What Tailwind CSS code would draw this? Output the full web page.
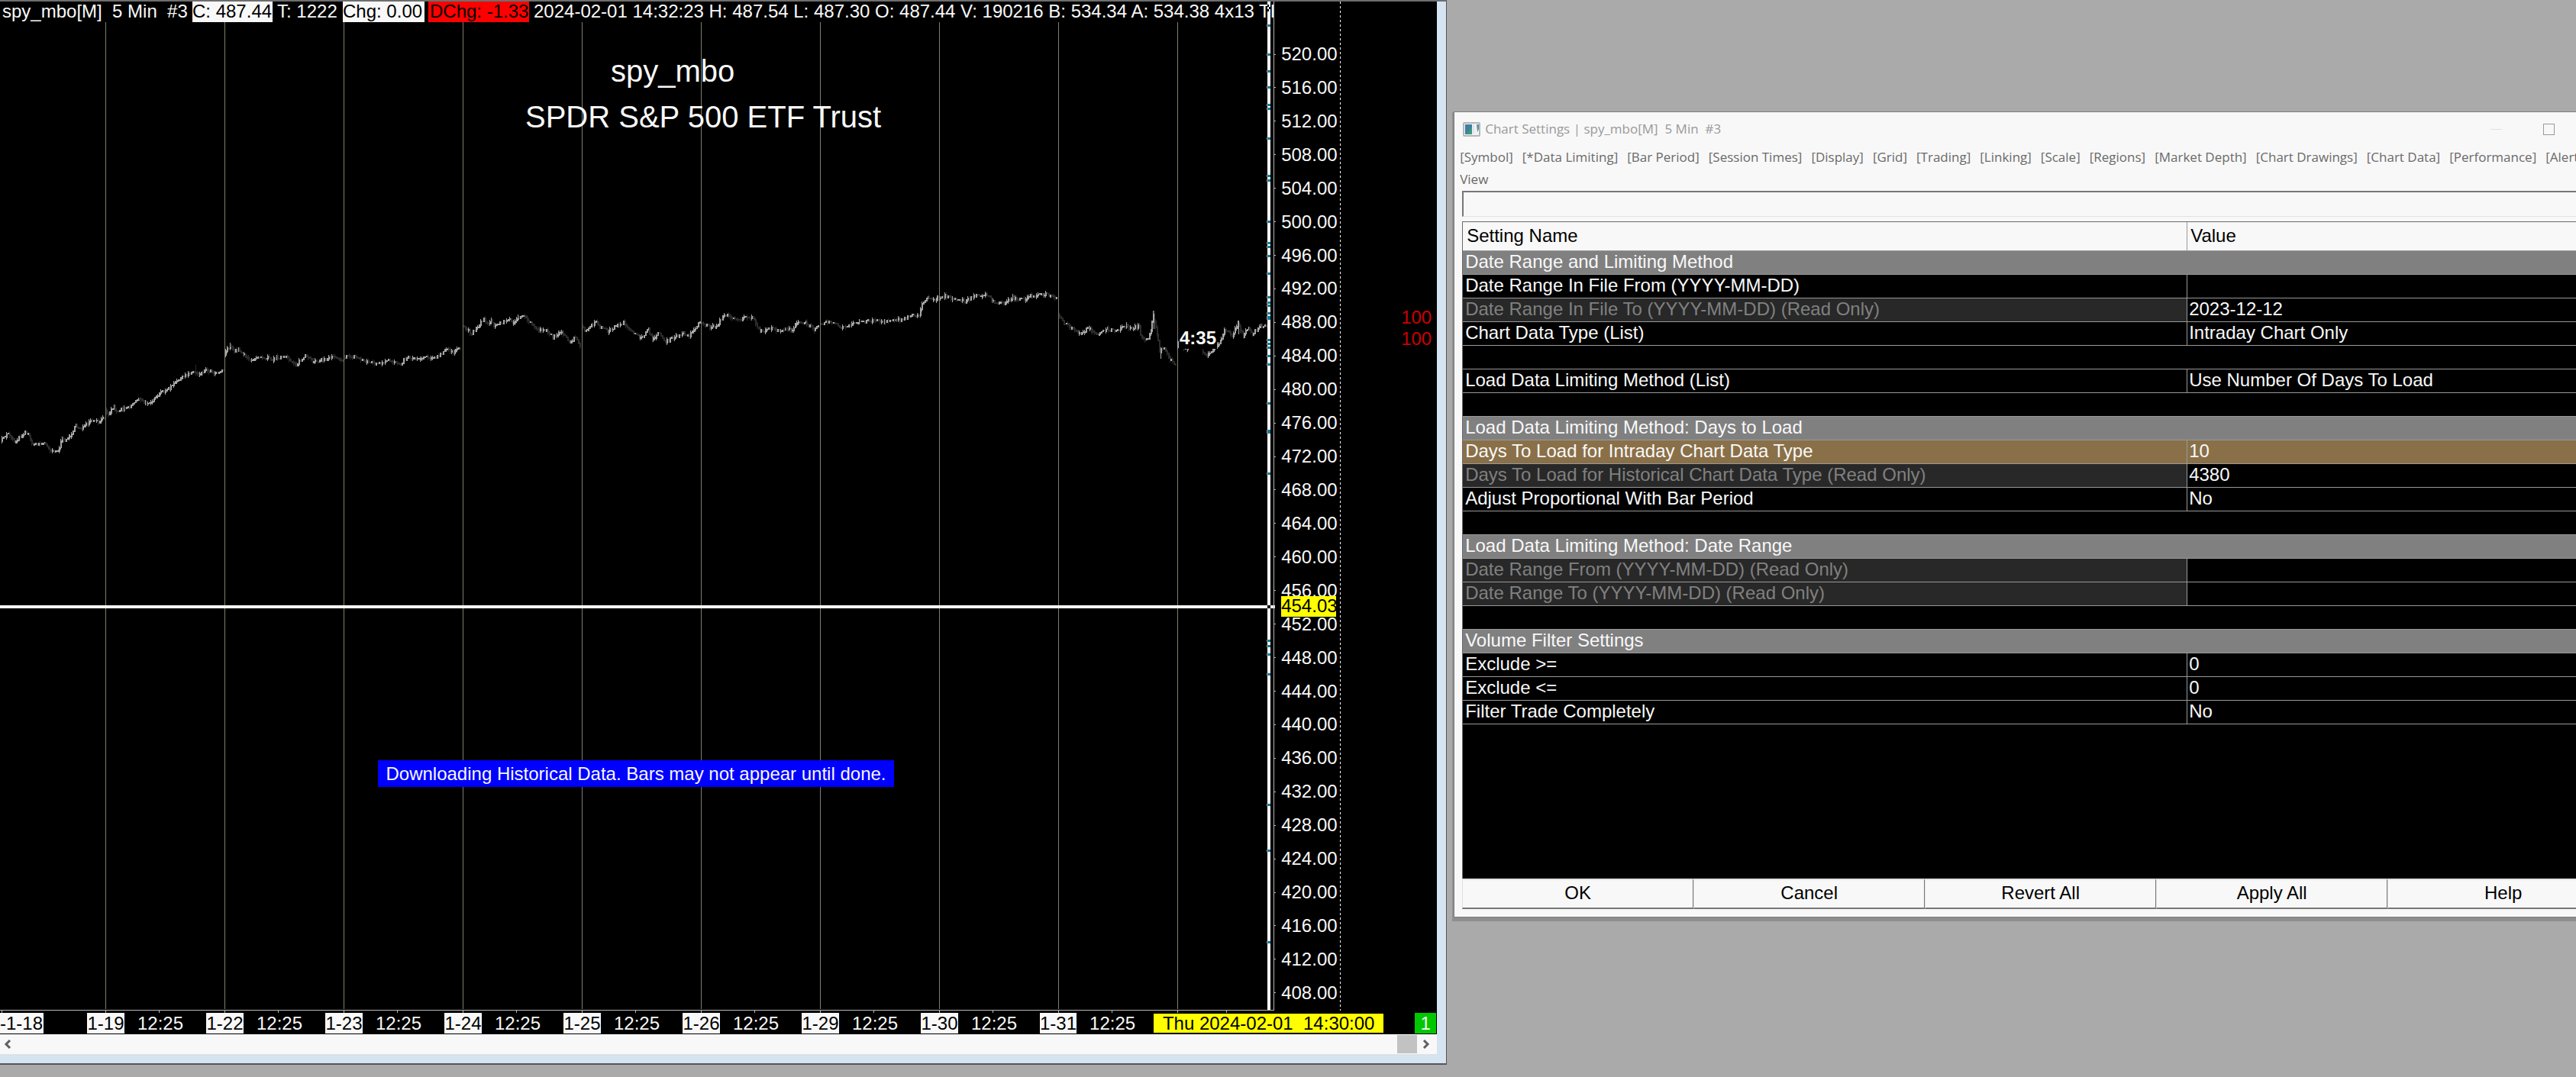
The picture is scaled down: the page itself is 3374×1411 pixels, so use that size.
<!DOCTYPE html>
<html lang="en">
<head>
  <meta charset="UTF-8" />
  <meta name="viewport" content="width=device-width, initial-scale=1.0"/>
  <title>spy_mbo[M] 5 Min #3</title>
  <script src="https://cdn.jsdelivr.net/npm/@tailwindcss/browser@4"></script>
</head>
<body class="bg-[#aaaaaa] h-screen overflow-hidden flex items-start font-['Liberation_Sans',Arial,sans-serif] text-[24px] leading-[28px]">

  <!-- Chart window -->
  <main class="w-[56.17%] h-[98.87%] shrink-0 flex flex-col bg-[#d6e3f1] border-t-2 border-t-[#6e6e6e] border-r border-r-[#55555c] border-b-2 border-b-[#55555c] pr-[12px] pb-[11px]">
    <div class="flex-1 min-h-0 flex flex-col bg-black text-[#f8f8f8]">
      <div class="flex-1 min-h-0 flex">

        <!-- Plot -->
        <section class="relative flex-1 min-w-0">
          <svg id="plot" class="absolute inset-0 w-full h-full overflow-visible" viewBox="0 2 1668 1322" preserveAspectRatio="none" shape-rendering="crispEdges"></svg>
          <header class="relative flex h-[27px] leading-[26px] bg-black whitespace-pre overflow-hidden pl-[3px]">
            <span class="w-[249px] shrink-0">spy_mbo[M]  5 Min  #3</span>
            <span class="w-[105px] shrink-0 bg-[#f8f8f8] text-black">C: 487.44</span>
            <span class="w-[92px] shrink-0 pl-[6px]">T: 1222</span>
            <span class="w-[107px] shrink-0 bg-[#f8f8f8] text-black">Chg: 0.00</span>
            <span class="w-[132px] shrink-0 ml-[5px] bg-[#ff0000] text-black pl-[2px]">DChg: -1.33</span>
            <span class="pl-[6px]">2024-02-01 14:32:23 H: 487.54 L: 487.30 O: 487.44 V: 190216 B: 534.34 A: 534.38 4x13 TR</span>
          </header>
          <h1 class="absolute left-[800px] top-[64px] text-[40px] leading-[54px] whitespace-nowrap">spy_mbo</h1>
          <h2 class="absolute left-[688px] top-[124px] text-[40px] leading-[54px] whitespace-nowrap">SPDR S&amp;P 500 ETF Trust</h2>
          <b class="absolute left-[1544px] top-[427px] bg-black px-px">4:35</b>
          <p class="absolute left-[495px] top-[994px] w-[676px] h-[35px] leading-[35px] bg-[#0000ff] text-center whitespace-nowrap">Downloading Historical Data. Bars may not appear until done.</p>
          <svg id="cursor" class="absolute inset-0 w-full h-full overflow-visible" viewBox="0 2 1668 1322" preserveAspectRatio="none" shape-rendering="crispEdges"></svg>
        </section>

        <!-- Price scale -->
        <aside class="relative w-[214px] shrink-0 flex">
          <ol id="prices" class="w-[87px] border-l border-[#b8b8b8] flex flex-col justify-between pt-[55px] pb-[9px]"></ol>
          <div class="w-px bg-[repeating-linear-gradient(to_bottom,#f8f8f8_0_3px,transparent_3px_6px)]"></div>
          <div class="flex-1 text-right pr-[7px] pt-[400px] text-[#cc0000]">
            <p>100</p>
            <p>100</p>
          </div>
          <span class="absolute left-[10px] top-[779px] w-[72px] h-[27px] leading-[26px] bg-[#ffff00] text-black">454.03</span>
        </aside>
      </div>

      <!-- Time scale -->
      <footer id="times" class="flex shrink-0 pt-[3px] h-[31px] leading-[27px] whitespace-pre overflow-hidden">
        <span class="w-[57px] h-[27px] mr-[57px] shrink-0 bg-[#f8f8f8] text-black">-1-18</span>
        <span class="order-last ml-auto w-[301px] h-[25px] leading-[25px] mt-px shrink-0 bg-[#ffff00] text-black text-center">Thu 2024-02-01  14:30:00</span>
        <span class="order-last ml-[41px] mr-px w-[28px] h-[27px] shrink-0 bg-[#00c800] text-center">1</span>
      </footer>
    </div>

    <!-- Scrollbar -->
    <div class="h-[27px] shrink-0 flex items-center bg-[#f8f8f8] border-b border-[#e0e0e0]">
      <button class="w-[24px] h-full pl-[5px]" aria-label="Scroll left">
        <svg class="w-[10px] h-[12px]" viewBox="0 0 10 12" fill="none" stroke="#606060" stroke-width="3"><path d="M8 1 3 6l5 5"/></svg>
      </button>
      <span class="ml-auto w-[26px] h-[24px] bg-[#c2c2c2]"></span>
      <button class="w-[26px] h-full pl-[7px]" aria-label="Scroll right">
        <svg class="w-[10px] h-[12px]" viewBox="0 0 10 12" fill="none" stroke="#606060" stroke-width="3"><path d="m2 1 5 5-5 5"/></svg>
      </button>
    </div>
  </main>

  <!-- Chart settings window, runs past the right edge of the desktop -->
  <section class="ml-[10px] mt-[147px] w-[1535px] shrink-0 bg-[#f8f8f8] shadow-[0_0_0_1px_#7c7c7c,0_3px_0_3px_#8e8e8e] px-[10px] pb-[10px]">
    <div class="flex items-center h-[44px] pl-px font-['Open_Sans','Noto_Sans',sans-serif] text-[17px] text-[#999999]">
      <svg class="w-[23px] h-[19px]" viewBox="0 0 23 19">
        <rect x="1" y="1" width="21" height="17" rx="1" fill="#f0f2f4" stroke="#b4b8ba" stroke-width="2"/>
        <rect x="3" y="3" width="9" height="13" fill="#3f7fa0"/>
        <path d="M5 16 12 6v10z" fill="#3f9a74"/>
        <path d="M13 3h2v12h-2z" fill="#dfe3e8"/>
        <path d="M18 3h3v6l-2 4z" fill="#5b93a4"/>
      </svg>
      <span class="ml-[6px] whitespace-pre">Chart Settings | spy_mbo[M]  5 Min  #3</span>
      <button class="ml-auto w-[15px] h-px bg-[#e0e0e0]" aria-label="Minimize"></button>
      <button class="ml-[54px] mr-[84px] w-[15px] h-[15px] border border-[#999999]" aria-label="Maximize"></button>
    </div>
    <nav class="-ml-[3px] flex flex-wrap gap-x-[12px] font-['Open_Sans','Noto_Sans',sans-serif] text-[17px] leading-[29px] text-[#6a6a6a] whitespace-nowrap mb-[1px]">
      <a href="#">[Symbol]</a>
      <a href="#">[*Data Limiting]</a>
      <a href="#">[Bar Period]</a>
      <a href="#">[Session Times]</a>
      <a href="#">[Display]</a>
      <a href="#">[Grid]</a>
      <a href="#">[Trading]</a>
      <a href="#">[Linking]</a>
      <a href="#">[Scale]</a>
      <a href="#">[Regions]</a>
      <a href="#">[Market Depth]</a>
      <a href="#">[Chart Drawings]</a>
      <a href="#">[Chart Data]</a>
      <a href="#">[Performance]</a>
      <a href="#">[Alerts]</a>
      <a href="#" class="w-full">View</a>
    </nav>
    <input type="text" aria-label="Setting" class="block w-full h-[34px] bg-[#f8f8f8] border-t-2 border-l-2 border-b border-t-[#777777] border-l-[#777777] border-b-[#e0e0e0] px-[4px] outline-none" />

    <!-- Settings list -->
    <div class="mt-[6px] h-[861px] bg-black border-t border-l border-[#696969] text-[#f8f8f8]">
      <table class="w-full table-fixed border-separate border-spacing-0 text-left">
        <thead class="bg-[#f8f8f8] text-black">
          <tr class="h-[38px]">
            <th class="w-[949px] font-normal pl-[5px] pb-[2px] border-r border-b border-[#999999]">Setting Name</th>
            <th class="font-normal pl-[4px] pb-[2px] border-b border-[#999999]">Value</th>
          </tr>
        </thead>
        <tbody id="settings"></tbody>
      </table>
    </div>

    <div class="grid grid-cols-5">
      <button class="h-[40px] pb-[2px] border-l border-t-2 border-r border-b-2 border-l-[#e0e0e0] border-t-[#e0e0e0] border-r-[#777777] border-b-[#777777] text-black">OK</button>
      <button class="h-[40px] pb-[2px] border-l border-t-2 border-r border-b-2 border-l-[#e0e0e0] border-t-[#e0e0e0] border-r-[#777777] border-b-[#777777] text-black">Cancel</button>
      <button class="h-[40px] pb-[2px] border-l border-t-2 border-r border-b-2 border-l-[#e0e0e0] border-t-[#e0e0e0] border-r-[#777777] border-b-[#777777] text-black">Revert All</button>
      <button class="h-[40px] pb-[2px] border-l border-t-2 border-r border-b-2 border-l-[#e0e0e0] border-t-[#e0e0e0] border-r-[#777777] border-b-[#777777] text-black">Apply All</button>
      <button class="h-[40px] pb-[2px] border-l border-t-2 border-r border-b-2 border-l-[#e0e0e0] border-t-[#e0e0e0] border-r-[#777777] border-b-[#777777] text-black">Help</button>
    </div>
  </section>

  <script>
    // Rows of the settings list: kind, name, value
    const rows = [
      ["head", "Date Range and Limiting Method"],
      ["row", "Date Range In File From (YYYY-MM-DD)", ""],
      ["read", "Date Range In File To (YYYY-MM-DD) (Read Only)", "2023-12-12"],
      ["row", "Chart Data Type (List)", "Intraday Chart Only"],
      ["gap"],
      ["row", "Load Data Limiting Method (List)", "Use Number Of Days To Load"],
      ["gap"],
      ["head", "Load Data Limiting Method: Days to Load"],
      ["active", "Days To Load for Intraday Chart Data Type", "10"],
      ["read", "Days To Load for Historical Chart Data Type (Read Only)", "4380"],
      ["row", "Adjust Proportional With Bar Period", "No"],
      ["gap"],
      ["head", "Load Data Limiting Method: Date Range"],
      ["read", "Date Range From (YYYY-MM-DD) (Read Only)", ""],
      ["read", "Date Range To (YYYY-MM-DD) (Read Only)", ""],
      ["gap"],
      ["head", "Volume Filter Settings"],
      ["row", "Exclude &gt;=", "0"],
      ["row", "Exclude &lt;=", "0"],
      ["row", "Filter Trade Completely", "No"]
    ];
    const nameStyle = { row: "", read: "bg-[#282828] text-[#808080]", active: "bg-[#8a7048]" };
    const valueStyle = { row: "", read: "", active: "bg-[#8a7048]" };
    document.getElementById("settings").innerHTML = rows.map(([kind, name, value]) => {
      if (kind === "gap") {
        return `<tr class="h-[31px]"><td colspan="2" class="border-b border-[#999999]"></td></tr>`;
      }
      if (kind === "head") {
        return `<tr class="h-[31px]"><td colspan="2" class="pl-[3px] pb-[2px] bg-[#808080] border-b border-[#999999]">${name}</td></tr>`;
      }
      return `<tr class="h-[31px]"><td class="pl-[3px] pb-[2px] border-r border-b border-[#999999] ${nameStyle[kind]}">${name}</td><td class="pl-[2px] pb-[2px] border-b border-[#999999] ${valueStyle[kind]}">${value}</td></tr>`;
    }).join("");

    // Price scale
    let prices = "";
    for (let p = 520; p >= 408; p -= 4) {
      prices += `<li class="flex items-center h-[28px]"><i class="w-[2px] h-px bg-[#b8b8b8] mr-[7px]"></i>${p}.00</li>`;
    }
    document.getElementById("prices").innerHTML = prices;

    // Time scale
    const days = ["1-19", "1-22", "1-23", "1-24", "1-25", "1-26", "1-29", "1-30", "1-31"];
    document.getElementById("times").insertAdjacentHTML("beforeend", days.map(d =>
      `<span class="w-[156px] last:w-[124px] h-[27px] shrink-0 flex"><span class="w-[49px] mr-[17px] bg-[#f8f8f8] text-black text-center">${d}</span>12:25</span>`
    ).join(""));

    const rect = (x, y, w, h, fill) => `<rect x="${x}" y="${y}" width="${w}" height="${h}" fill="${fill}"/>`;

    // Session path, one list of x,y points for each trading day
    const sessions = [
      [2,578, 12,567, 20,579, 34,566, 39,570, 44,582, 59,581, 68,590, 77,591, 82,577, 91,574, 100,559, 108,561, 122,551, 130,553, 137,548],
      [139,537, 143,542, 150,533, 154,540, 163,534, 171,533, 182,522, 191,528, 202,525, 212,514, 223,509, 236,497, 252,487, 261,490, 271,485, 282,488, 293,485],
      [295,465, 297,458, 302,454, 308,460, 313,458, 323,466, 331,474, 339,467, 350,469, 352,466, 358,472, 363,468, 374,468, 389,477, 401,467, 410,473, 428,471, 438,466, 449,471],
      [451,468, 466,467, 482,474, 500,477, 510,473, 526,476, 534,468, 548,470, 558,467, 572,469, 587,458, 596,461, 604,457],
      [607,427, 619,437, 635,418, 639,423, 644,421, 648,427, 657,423, 667,419, 672,422, 679,417, 688,415, 697,424, 705,432, 717,432, 725,442, 735,434, 747,449, 755,442, 760,453],
      [763,428, 768,433, 783,422, 787,428, 798,434, 810,426, 819,423, 827,435, 838,441, 843,440, 850,433, 855,443, 865,437, 873,448, 883,443, 896,437, 904,439, 910,432, 917,423],
      [919,423, 929,428, 938,428, 950,413, 964,417, 970,419, 980,415, 987,417, 996,434, 1004,433, 1014,429, 1022,436, 1029,430, 1039,432, 1045,423, 1056,423, 1067,431, 1073,425],
      [1075,424, 1091,421, 1099,428, 1109,429, 1126,422, 1148,419, 1159,422, 1174,418, 1182,420, 1197,412, 1205,413, 1209,400, 1216,389, 1227,393, 1229,388],
      [1231,391, 1239,387, 1248,392, 1265,395, 1278,388, 1292,386, 1304,397, 1316,397, 1327,390, 1341,393, 1351,387, 1373,386, 1379,389, 1385,391],
      [1387,413, 1394,423, 1403,429, 1416,438, 1427,430, 1440,438, 1451,431, 1463,434, 1476,427, 1484,431, 1493,427, 1495,440, 1503,446, 1508,437, 1511,415, 1516,433, 1520,460, 1526,455, 1533,470, 1541,477],
      [1542,455, 1544,448, 1555,458, 1557,456],
      [1575,460, 1582,466, 1590,458, 1599,448, 1605,433, 1615,439, 1622,425, 1629,438, 1636,429, 1641,437, 1652,427, 1659,428]
    ];
    let seed = 7;
    const noise = () => (seed = (seed * 16807) % 2147483647) / 2147483647;

    let plot = "";
    for (let x = 138; x < 1668; x += 156) {
      plot += rect(x, 29, 1, 1293, "#7e7e6e");
    }
    for (const s of sessions) {
      let last = s[1];
      for (let i = 0; i + 3 < s.length; i += 2) {
        const [x0, y0, x1, y1] = s.slice(i, i + 4);
        for (let x = x0; x < x1; x += 2) {
          const y = y0 + (y1 - y0) * (x + 2 - x0) / (x1 - x0) + (noise() - 0.5) * 4;
          const fill = y <= last ? "#a6a6a6" : "#2c2c2c";
          const top = Math.round(Math.min(y, last)) - 1;
          const h = Math.round(Math.abs(y - last)) + 2;
          plot += rect(x, top, 2, h, fill);
          if (noise() > 0.6) plot += rect(x, top - 2, 1, h + 4, fill);
          last = y;
        }
      }
    }
    // Spikes
    plot += rect(256, 478, 1, 14, "#2c2c2c") + rect(1511, 411, 1, 20, "#a6a6a6") + rect(1520, 455, 1, 15, "#a6a6a6") + rect(1622, 420, 1, 18, "#a6a6a6");
    // Baseline and ticks
    plot += rect(0, 1323, 1669, 1, "#b8b8b8");
    for (let x = 2; x < 1660; x += x === 2 ? 136 : 156) plot += rect(x, 1324, 1, 3, "#b8b8b8");
    for (let x = 208; x < 1440; x += 156) plot += rect(x, 1324, 1, 3, "#b8b8b8");
    plot += rect(1456, 1324, 1, 3, "#b8b8b8") + rect(1606, 1324, 1, 3, "#b8b8b8");
    document.getElementById("plot").innerHTML = plot;

    // Crosshair, with the depth marks on its vertical line
    const marks = [33, 71, 93, 114, 137, 142, 181, 230, 236, 290, 318, 323, 335, 358, 389, 396, 400, 410, 415, 417, 445, 450, 455, 466, 477, 528, 564, 566, 620, 839, 846, 857, 883, 1054, 1114, 1234];
    let cursor = rect(1660, 2, 4, 1321, "#f8f8f8") + rect(0, 793, 1670, 4, "#f8f8f8") + rect(1660, 793, 4, 4, "#000000");
    cursor += rect(1660, 6, 2, 3, "#000000") + rect(1662, 9, 2, 3, "#000000") + rect(1660, 12, 2, 3, "#000000");
    for (const y of marks) cursor += rect(1659, y - 1, 1, 3, "#d08868") + rect(1660, y - 1, 4, 3, "#007fa0");
    document.getElementById("cursor").innerHTML = cursor;
  </script>
</body>
</html>
